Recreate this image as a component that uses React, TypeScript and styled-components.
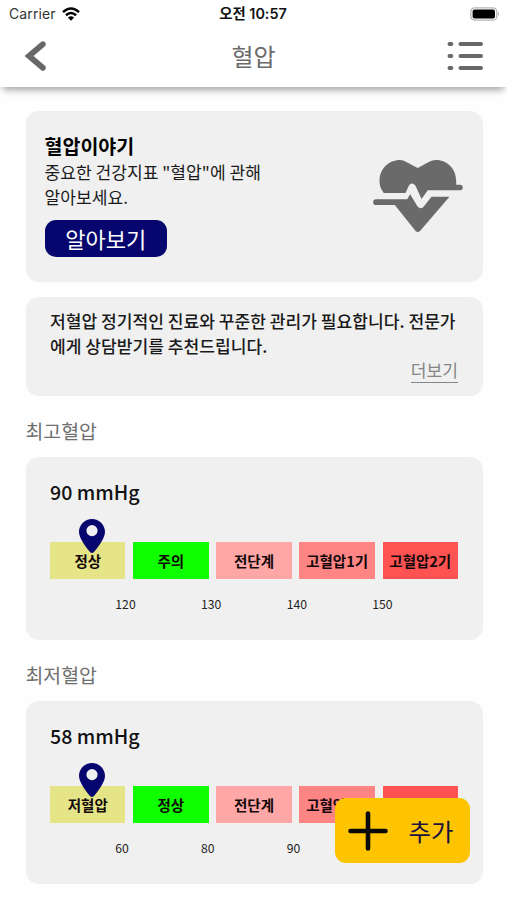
import React from "react";
import styled, { createGlobalStyle } from "styled-components";

const GlobalStyle = createGlobalStyle`
  * { box-sizing: border-box; }
  body {
    margin: 0;
    background: #fff;
    color: #111;
    font-family: "Noto Sans CJK KR", "Noto Sans", sans-serif;
  }
`;

const Screen = styled.div`
  position: relative;
  width: 507px;
  height: 900px;
  overflow: hidden;
  background: #fefefe;
`;

const Top = styled.header`
  height: 86.5px;
  background: #fff;
  box-shadow: 0 6px 7px -3px rgba(0, 0, 0, 0.36);
`;

const StatusBar = styled.div`
  display: grid;
  grid-template-columns: 1fr auto 1fr;
  align-items: center;
  height: 27px;
  padding: 0 7px 0 9px;
  font-family: Inter, "Noto Sans CJK KR", sans-serif;
  font-size: 14px;
`;

const Carrier = styled.div`
  display: flex;
  align-items: center;
  gap: 6px;
  color: #333;
  letter-spacing: 0.1px;
`;

const Clock = styled.div`
  margin-right: 3px;
  font-weight: 600;
  font-size: 14.4px;
  line-height: 20px;
  color: #111;
`;

const BatteryIcon = styled.svg`
  justify-self: end;
`;

const NavBar = styled.nav`
  display: grid;
  grid-template-columns: 1fr auto 1fr;
  align-items: center;
  height: 58px;
  padding: 0 23px 0 24px;
`;

const Title = styled.h1`
  margin: 0 1px 0 0;
  font-size: 24px;
  line-height: 36px;
  font-weight: 400;
  color: #6b6b6b;
`;

const MenuIcon = styled.svg`
  justify-self: end;
`;

const Content = styled.main`
  padding: 24.5px 24.5px 0 25.5px;
`;

const Card = styled.section<{ $height: number; $pad: string }>`
  height: ${(p) => p.$height}px;
  padding: ${(p) => p.$pad};
  border-radius: 13px;
  background: #f0f0f0;
`;

const StoryCard = styled(Card)`
  display: flex;
  justify-content: space-between;
`;

const StoryTitle = styled.h2`
  margin: 0;
  font-size: 19.5px;
  line-height: 26px;
  font-weight: 700;
  color: #000;
`;

const Text = styled.p`
  margin: 0;
  font-size: 17.1px;
  line-height: 24.6px;
  color: #1a1a1a;
  white-space: nowrap;
`;

const StoryText = styled(Text)`
  margin-top: 1px;
`;

const LearnButton = styled.button`
  display: flex;
  align-items: center;
  justify-content: center;
  width: 122.5px;
  height: 37px;
  margin-top: 11.3px;
  padding: 0 0 1px;
  border: 0;
  border-radius: 11px;
  background: #06066e;
  color: #fff;
  font: 400 22px/32px "Noto Sans CJK KR", sans-serif;
`;

const HeartIcon = styled.svg`
  margin-top: 26px;
`;

const NoticeCard = styled(Card)`
  display: flex;
  flex-direction: column;
  margin-top: 15px;
`;

const Notice = styled(Text)`
  font-weight: 500;
`;

const MoreLink = styled.a`
  align-self: flex-end;
  border-bottom: 1px solid #858585;
  font-size: 17.1px;
  line-height: 24px;
  color: #858585;
`;

const SectionTitle = styled.h3`
  height: 61.2px;
  margin: 0;
  padding-top: 20px;
  font-size: 19.4px;
  line-height: 29px;
  font-weight: 400;
  color: #6f6f6f;
`;

const Reading = styled.div`
  font-size: 19.6px;
  line-height: 30px;
  font-weight: 500;
`;

const Scale = styled.div`
  position: relative;
  display: grid;
  grid-template-columns: repeat(5, 1fr);
  gap: 7.7px;
  margin-top: 35.3px;
`;

const Level = styled.div<{ $color: string }>`
  height: 36.6px;
  background: ${(p) => p.$color};
  color: #120808;
  font-size: 14.5px;
  line-height: 37.4px;
  font-weight: 700;
  text-align: center;
  white-space: nowrap;
`;

const Pin = styled.svg`
  position: absolute;
  left: 29.3px;
  top: -23.2px;
`;

const Ticks = styled.div`
  display: flex;
  justify-content: space-evenly;
  margin-top: 16.5px;
`;

const Tick = styled.span`
  width: 20.3px;
  font-size: 12.2px;
  line-height: 18px;
  color: #222;
`;

const AddButton = styled.button`
  position: absolute;
  left: 334.5px;
  top: 798.3px;
  display: flex;
  align-items: center;
  gap: 21px;
  width: 135.5px;
  height: 64.7px;
  padding: 0 0 0 13px;
  border: 0;
  border-radius: 11px;
  background: #ffc400;
  color: #1b1340;
  font: 400 24.4px/36px "Noto Sans CJK KR", sans-serif;
`;

const COLORS = ["#e5e588", "#10ff00", "#ffa6a6", "#ff8585", "#ff5353"];

function Gauge({ value, levels, ticks }: { value: number; levels: string[]; ticks: number[] }) {
  return (
    <Card $height={183} $pad="20px 24.5px 0">
      <Reading>{value} mmHg</Reading>
      <Scale>
        {levels.map((label, i) => (
          <Level key={label} $color={COLORS[i]}>{label}</Level>
        ))}
        <Pin width="26" height="34" viewBox="0 0 26 34">
          <path
            fillRule="evenodd"
            fill="#06066e"
            d="M13 0C5.8 0 0 5.8 0 13c0 5.300 5 12.800 11.200 20.200q1.800 1.600 3.600 0C21 25.800 26 18.300 26 13 26 5.800 20.200 0 13 0Zm0 6a5.600 5.600 0 1 1 0 11.200A5.600 5.600 0 0 1 13 6Z"
          />
        </Pin>
      </Scale>
      <Ticks>
        {ticks.map((t) => (
          <Tick key={t}>{t}</Tick>
        ))}
      </Ticks>
    </Card>
  );
}

export default function App() {
  return (
    <Screen>
      <GlobalStyle />
      <Top>
        <StatusBar>
          <Carrier>
            Carrier
            <svg width="18" height="14" viewBox="0 0 18 14">
              <g fill="none" stroke="#000" strokeWidth="2.5">
                <path d="M1 5.200Q9-2.200 17 5.200" />
                <path d="M3.900 8.300Q9 3.700 14.100 8.300" />
              </g>
              <path d="M9 13.700 5.900 10.500Q9 8 12.100 10.500Z" />
            </svg>
          </Carrier>
          <Clock>오전 10:57</Clock>
          <BatteryIcon width="30" height="14" viewBox="0 0 30 14">
            <rect x=".8" y=".8" width="26" height="12.400" rx="4" fill="#fff" stroke="#b5b5b5" strokeWidth="1.300" />
            <rect x="2.600" y="2.500" width="22.400" height="9" rx="2" />
            <path d="M28 4.800q2 2.200 0 4.400Z" fill="#aaa" />
          </BatteryIcon>
        </StatusBar>
        <NavBar>
          <svg width="24" height="30" viewBox="0 0 24 30">
            <path d="M18.800 3.200 5 15l13.800 11.800" fill="none" stroke="#686868" strokeWidth="5.800" strokeLinecap="round" strokeLinejoin="miter" />
          </svg>
          <Title>혈압</Title>
          <MenuIcon width="37" height="30" viewBox="0 0 37 30" fill="none" stroke="#686868" strokeWidth="4" strokeLinecap="round">
            <path d="M2.500 3h1.800M13.500 3h20.500M2.500 15h1.800M13.500 15h20.500M2.500 27h1.800M13.500 27h20.500" />
          </MenuIcon>
        </NavBar>
      </Top>
      <Content>
        <StoryCard $height={170.5} $pad="22px 20px 0 19px">
          <div>
            <StoryTitle>혈압이야기</StoryTitle>
            <StoryText>중요한 건강지표 "혈압"에 관해<br />알아보세요.</StoryText>
            <LearnButton>알아보기</LearnButton>
          </div>
          <HeartIcon width="90" height="75" viewBox="0 0 90 75" fill="#6a6a6a">
            <path d="M10.800 34C8 30.500 6.500 27 6.500 22C6.500 10 15.500 1 27 1 31 1 35 4 44.800 9 54 4 58 1 63 1 74.500 1 83.200 10 83.200 22V25.700H87a2.800 2.800 0 0 1 0 5.600H54.800L48.500 40 42.500 26.700Q38.800 22.500 35.800 26.700L32.500 34Z" />
            <path d="M3 40.300H34.200L37.200 35.300 44.200 47Q48 51.500 51.200 47L58.500 37.700H76.500L47 72Q44.800 74 42.600 72L21.800 46H3a2.850 2.850 0 0 1 0-5.700Z" />
          </HeartIcon>
        </StoryCard>
        <NoticeCard $height={99} $pad="12.5px 24.5px 0">
          <Notice>저혈압 정기적인 진료와 꾸준한 관리가 필요합니다. 전문가<br />에게 상담받기를 추천드립니다.</Notice>
          <MoreLink>더보기</MoreLink>
        </NoticeCard>
        <SectionTitle>최고혈압</SectionTitle>
        <Gauge value={90} levels={["정상", "주의", "전단계", "고혈압1기", "고혈압2기"]} ticks={[120, 130, 140, 150]} />
        <SectionTitle>최저혈압</SectionTitle>
        <Gauge value={58} levels={["저혈압", "정상", "전단계", "고혈압1기", "고혈압2기"]} ticks={[60, 80, 90, 100]} />
      </Content>
      <AddButton>
        <svg width="40" height="40" viewBox="0 0 40 40">
          <path d="M20 2.500v35M2.500 20h35" stroke="#0a0a0a" strokeWidth="4.600" strokeLinecap="round" />
        </svg>
        추가
      </AddButton>
    </Screen>
  );
}
